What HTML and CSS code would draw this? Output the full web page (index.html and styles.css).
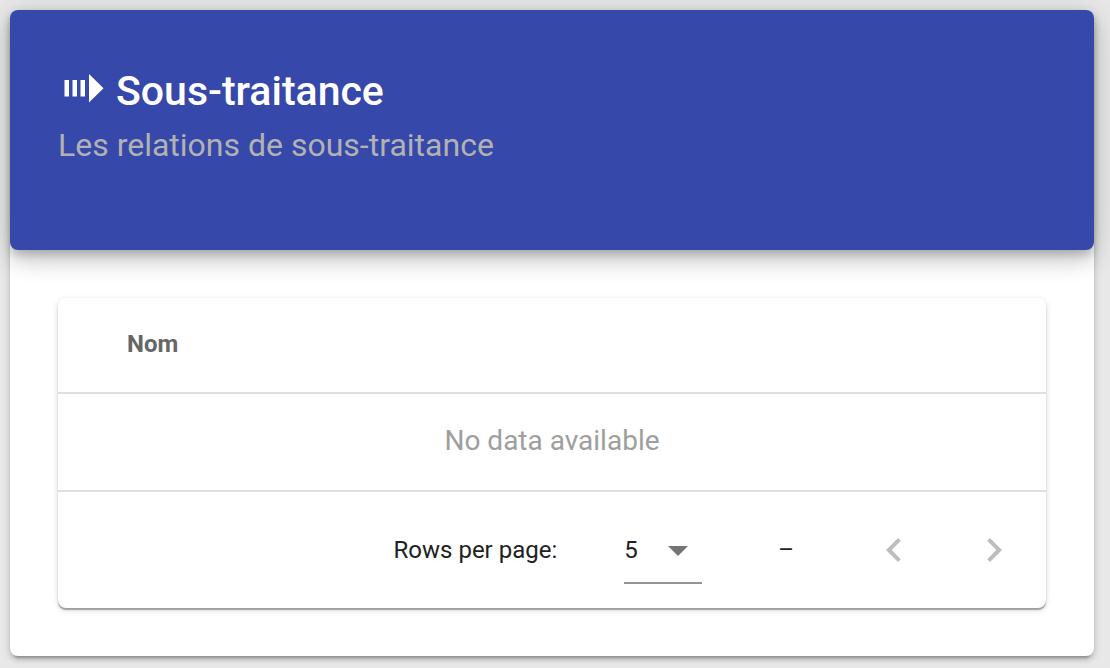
FILE: index.html
```html
<!DOCTYPE html>
<html lang="fr">
<head>
<meta charset="utf-8">
<meta name="viewport" content="width=device-width, initial-scale=1">
<title>Sous-traitance</title>
<link rel="stylesheet" href="styles.css">
</head>
<body>
<main class="card">
  <header class="card-header">
    <h1 class="title">
      <svg class="title-icon" viewBox="0 0 40 30" aria-hidden="true"><path fill="currentColor" d="M.5 6H5v16.500H.5zM8.500 6H13v16.500H8.500zM16.500 6H21v16.500h-4.500zM25 0l14.500 14.250L25 28.500z"/></svg>
      <span>Sous-traitance</span>
    </h1>
    <p class="subtitle">Les relations de sous-traitance</p>
  </header>
  <section class="table-card">
    <table class="data-table">
      <thead><tr><th scope="col">Nom</th></tr></thead>
      <tbody><tr><td>No data available</td></tr></tbody>
    </table>
    <footer class="pager">
      <label class="pager-label" for="rows">Rows per page:</label>
      <div class="select-wrap">
        <select class="select" id="rows"><option>5</option><option>10</option><option>15</option></select>
        <svg class="caret" viewBox="0 0 20 10" aria-hidden="true"><path fill="currentColor" d="M0 0h20L10 10z"/></svg>
      </div>
      <span class="range">–</span>
      <nav class="pager-nav" aria-label="Pagination">
        <button class="nav-button" type="button" disabled aria-label="Previous page"><svg class="chevron" viewBox="0 0 24 24" aria-hidden="true"><path fill="currentColor" d="M15.410 16.580L10.830 12l4.580-4.590L14 6l-6 6 6 6z"/></svg></button>
        <button class="nav-button" type="button" disabled aria-label="Next page"><svg class="chevron" viewBox="0 0 24 24" aria-hidden="true"><path fill="currentColor" d="M8.590 16.580L13.170 12 8.590 7.410 10 6l6 6-6 6z"/></svg></button>
      </nav>
    </footer>
  </section>
</main>
</body>
</html>
```
FILE: styles.css
```css
* { box-sizing: border-box; }
body {
  margin: 0;
  padding: 10px 16px 12px 10px;
  background: #e8e8e8;
  font-family: Roboto, sans-serif;
  color: #212121;
}
.card {
  background: #fff;
  border-radius: 8px;
  box-shadow: 0 6px 2px -4px rgba(0, 0, 0, .2), 0 4px 4px rgba(0, 0, 0, .14), 0 2px 10px rgba(0, 0, 0, .12);
  padding-bottom: 48px;
}
.card-header {
  min-height: 240px;
  padding: 56px 48px;
  border-radius: 8px;
  background: #3748ab;
  color: #fff;
  box-shadow: 0 6px 10px -2px rgba(0, 0, 0, .2), 0 12px 20px rgba(0, 0, 0, .14), 0 2px 36px rgba(0, 0, 0, .12);
}
.title {
  display: flex;
  align-items: flex-start;
  gap: 12px;
  margin: 0;
  padding-left: 6px;
  font-size: 41px;
  line-height: 50px;
  font-weight: 500;
}
.title-icon { width: 40px; height: 30px; margin-top: 8px; }
.subtitle {
  margin: 5px 0 0;
  font-size: 32px;
  line-height: 48px;
  color: #b2b2b2;
}
.table-card {
  margin: 48px 48px 0;
  border-radius: 8px;
  background: #fff;
  box-shadow: 0 2px 1px rgba(0, 0, 0, .3), 0 2px 6px rgba(0, 0, 0, .16);
}
.data-table { width: 100%; border-collapse: separate; border-spacing: 0; }
.data-table th {
  height: 96px;
  padding: 0 69px 2px;
  border-bottom: 2px solid #e0e0e0;
  text-align: left;
  font-size: 24px;
  line-height: 36px;
  font-weight: 700;
  color: #666;
}
.data-table td {
  height: 98px;
  padding: 0 32px 2px;
  border-bottom: 2px solid #e0e0e0;
  text-align: center;
  font-size: 28px;
  line-height: 36px;
  color: #9e9e9e;
}
.pager {
  display: flex;
  align-items: center;
  justify-content: flex-end;
  min-height: 116px;
  padding-right: 16px;
  font-size: 24px;
  line-height: 36px;
}
.select-wrap { position: relative; width: 78px; margin-left: 67px; }
.select {
  display: block;
  appearance: none;
  width: 100%;
  height: 68px;
  padding: 2px 0 0;
  border: 0;
  border-bottom: 2px solid #949494;
  border-radius: 0;
  background: transparent;
  color: inherit;
  font: inherit;
}
.caret {
  position: absolute;
  right: 14px;
  top: 30px;
  width: 20px;
  height: 10px;
  color: #757575;
  pointer-events: none;
}
.range { margin: 0 64px 0 76px; }
.pager-nav { display: flex; gap: 28px; }
.nav-button {
  display: flex;
  align-items: center;
  justify-content: center;
  width: 72px;
  height: 72px;
  padding: 0;
  border: 0;
  background: transparent;
  color: #bdbdbd;
}
.chevron { width: 48px; height: 48px; }
```
